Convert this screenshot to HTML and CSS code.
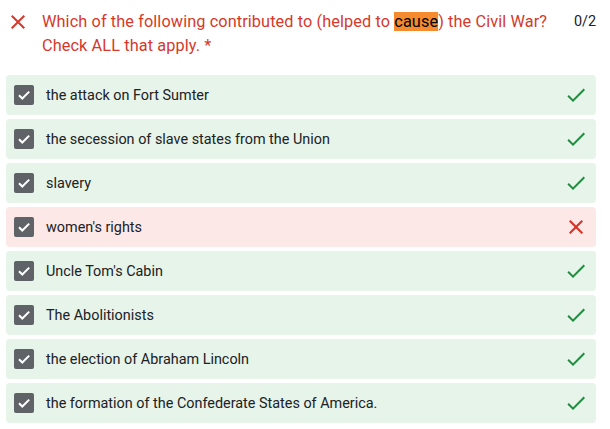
FILE: index.html
```html
<!DOCTYPE html>
<html>
<head>
<meta charset="utf-8">
<link rel="stylesheet" href="styles.css">
</head>
<body>
<div class="question">
  <svg class="qicon" viewBox="0 0 24 24" width="24" height="24"><path d="M19 6.41L17.59 5 12 10.59 6.41 5 5 6.41 10.59 12 5 17.59 6.41 19 12 13.41 17.59 19 19 17.59 13.41 12z" fill="#d5392c"/></svg>
  <div class="qtext">Which of the following contributed to (helped to <span class="hl">cause</span>) the Civil War? Check ALL that apply. *</div>
  <div class="score">0/2</div>
</div>
<div class="options">
  <div class="opt ok"><span class="box"><svg viewBox="0 0 20 20" width="20" height="20"><path d="M5 10.2l3.3 3.3L15.2 6.6" stroke="#fff" stroke-width="2" fill="none"/></svg></span><span class="label">the attack on Fort Sumter</span><svg class="mark" viewBox="0 0 24 24" width="24" height="24"><path d="M9 16.17L4.83 12l-1.42 1.41L9 19 21 7l-1.41-1.41z" fill="#1e8e3e"/></svg></div>
  <div class="opt ok"><span class="box"><svg viewBox="0 0 20 20" width="20" height="20"><path d="M5 10.2l3.3 3.3L15.2 6.6" stroke="#fff" stroke-width="2" fill="none"/></svg></span><span class="label">the secession of slave states from the Union</span><svg class="mark" viewBox="0 0 24 24" width="24" height="24"><path d="M9 16.17L4.83 12l-1.42 1.41L9 19 21 7l-1.41-1.41z" fill="#1e8e3e"/></svg></div>
  <div class="opt ok"><span class="box"><svg viewBox="0 0 20 20" width="20" height="20"><path d="M5 10.2l3.3 3.3L15.2 6.6" stroke="#fff" stroke-width="2" fill="none"/></svg></span><span class="label">slavery</span><svg class="mark" viewBox="0 0 24 24" width="24" height="24"><path d="M9 16.17L4.83 12l-1.42 1.41L9 19 21 7l-1.41-1.41z" fill="#1e8e3e"/></svg></div>
  <div class="opt bad"><span class="box"><svg viewBox="0 0 20 20" width="20" height="20"><path d="M5 10.2l3.3 3.3L15.2 6.6" stroke="#fff" stroke-width="2" fill="none"/></svg></span><span class="label">women's rights</span><svg class="mark" viewBox="0 0 24 24" width="24" height="24"><path d="M19 6.41L17.59 5 12 10.59 6.41 5 5 6.41 10.59 12 5 17.59 6.41 19 12 13.41 17.59 19 19 17.59 13.41 12z" fill="#d93025"/></svg></div>
  <div class="opt ok"><span class="box"><svg viewBox="0 0 20 20" width="20" height="20"><path d="M5 10.2l3.3 3.3L15.2 6.6" stroke="#fff" stroke-width="2" fill="none"/></svg></span><span class="label">Uncle Tom's Cabin</span><svg class="mark" viewBox="0 0 24 24" width="24" height="24"><path d="M9 16.17L4.83 12l-1.42 1.41L9 19 21 7l-1.41-1.41z" fill="#1e8e3e"/></svg></div>
  <div class="opt ok"><span class="box"><svg viewBox="0 0 20 20" width="20" height="20"><path d="M5 10.2l3.3 3.3L15.2 6.6" stroke="#fff" stroke-width="2" fill="none"/></svg></span><span class="label">The Abolitionists</span><svg class="mark" viewBox="0 0 24 24" width="24" height="24"><path d="M9 16.17L4.83 12l-1.42 1.41L9 19 21 7l-1.41-1.41z" fill="#1e8e3e"/></svg></div>
  <div class="opt ok"><span class="box"><svg viewBox="0 0 20 20" width="20" height="20"><path d="M5 10.2l3.3 3.3L15.2 6.6" stroke="#fff" stroke-width="2" fill="none"/></svg></span><span class="label">the election of Abraham Lincoln</span><svg class="mark" viewBox="0 0 24 24" width="24" height="24"><path d="M9 16.17L4.83 12l-1.42 1.41L9 19 21 7l-1.41-1.41z" fill="#1e8e3e"/></svg></div>
  <div class="opt ok"><span class="box"><svg viewBox="0 0 20 20" width="20" height="20"><path d="M5 10.2l3.3 3.3L15.2 6.6" stroke="#fff" stroke-width="2" fill="none"/></svg></span><span class="label">the formation of the Confederate States of America.</span><svg class="mark" viewBox="0 0 24 24" width="24" height="24"><path d="M9 16.17L4.83 12l-1.42 1.41L9 19 21 7l-1.41-1.41z" fill="#1e8e3e"/></svg></div>
</div>
</body>
</html>
```

FILE: styles.css
```css
html, body {
  margin: 0;
  padding: 0;
  background: #fff;
  font-family: Roboto, "Liberation Sans", Arial, sans-serif;
}
.question {
  display: flex;
  align-items: flex-start;
  padding: 10px 14px 0 6px;
  height: 65px;
  box-sizing: border-box;
}
.qicon {
  flex: none;
  margin-right: 12px;
}
.qtext {
  flex: 1;
  font-size: 16.3px;
  line-height: 24px;
  color: #d5392c;
  letter-spacing: 0.1px;
}
.hl {
  background: #f58b2e;
  color: #000;
}
.score {
  flex: none;
  margin-left: 20px;
  font-size: 14.4px;
  line-height: 24px;
  color: #202124;
}
.options {
  display: flex;
  flex-direction: column;
  gap: 4px;
  padding: 10px 14px 0 6px;
}
.opt {
  display: flex;
  align-items: center;
  height: 40px;
  padding: 0 8px;
  border-radius: 4px;
}
.ok { background: #e6f4ea; }
.bad { background: #fce8e6; }
.box {
  flex: none;
  width: 20px;
  height: 20px;
  border-radius: 2px;
  background: #5f6368;
  display: flex;
}
.label {
  flex: 1;
  margin-left: 12px;
  font-size: 14.4px;
  color: #202124;
}
.mark {
  flex: none;
}
```
